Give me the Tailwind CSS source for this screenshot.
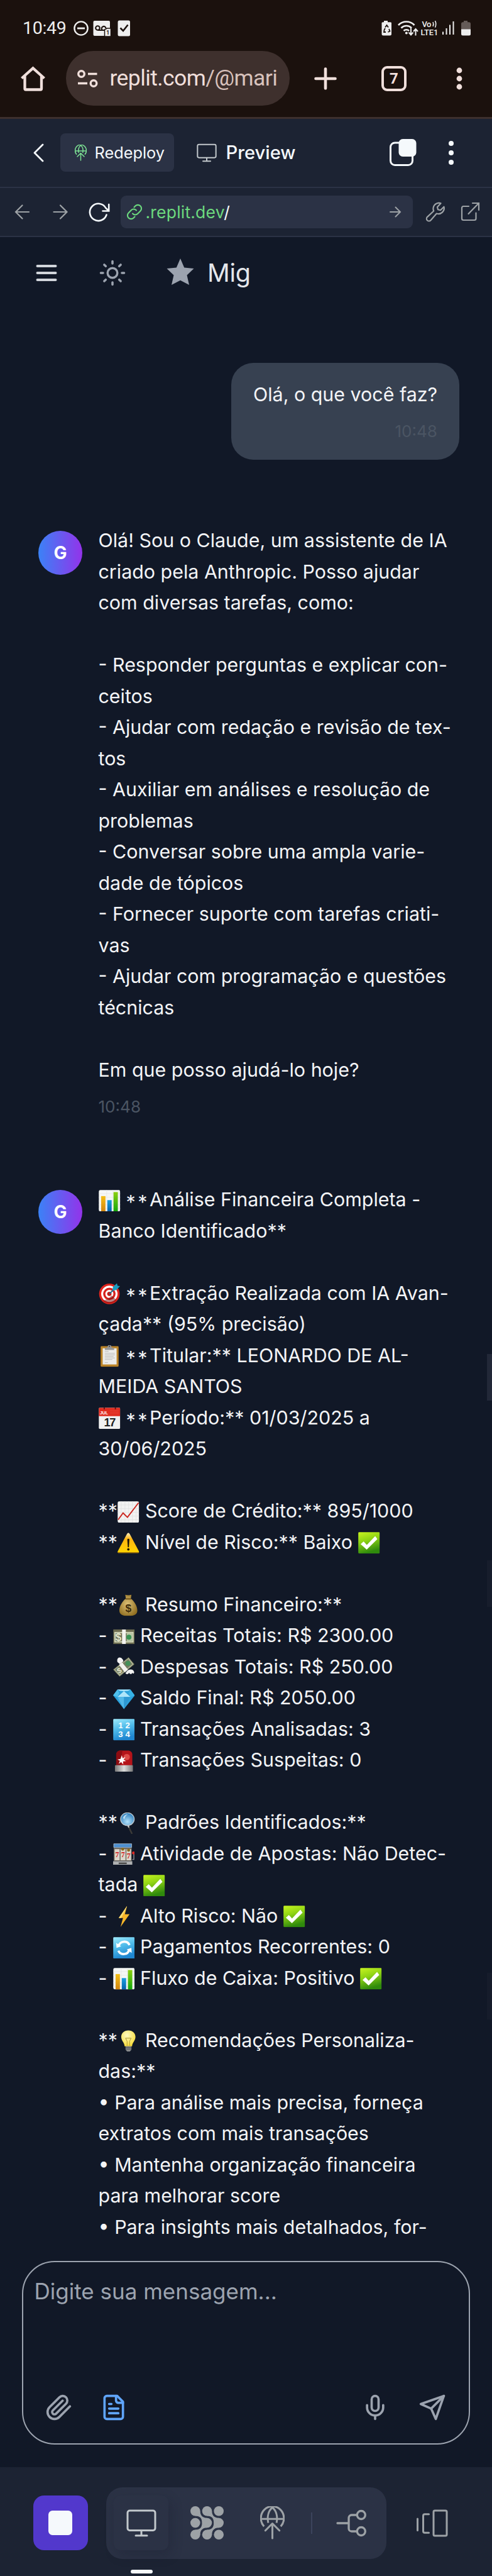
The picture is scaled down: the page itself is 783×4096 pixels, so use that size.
<!DOCTYPE html>
<html lang="pt-BR">
<head>
<meta charset="utf-8">
<title>Mig</title>
<script src="https://cdn.jsdelivr.net/npm/@tailwindcss/browser@4"></script>
</head>
<body class="w-[783px] h-[4096px] overflow-hidden bg-[#111827] font-['Inter',sans-serif]">

<!-- shared symbols -->
<svg class="absolute size-0" aria-hidden="true">
  <defs>
    <linearGradient id="gGreen" x1="0" y1="0" x2="0.3" y2="1"><stop offset="0" stop-color="#c8f420"/><stop offset=".45" stop-color="#8fd414"/><stop offset="1" stop-color="#2f8a0c"/></linearGradient>
    <linearGradient id="gBlue" x1="0" y1="0" x2="0.3" y2="1"><stop offset="0" stop-color="#a0ecfd"/><stop offset=".5" stop-color="#4fbbea"/><stop offset="1" stop-color="#1f86d0"/></linearGradient>
    <linearGradient id="gGold" x1="0" y1="0" x2="0" y2="1"><stop offset="0" stop-color="#f5c018"/><stop offset="1" stop-color="#cf8410"/></linearGradient>
    <linearGradient id="gBar" x1="0" y1="0" x2="0" y2="1"><stop offset="0" stop-color="#18a0e0"/><stop offset="1" stop-color="#0561ab"/></linearGradient>
    <linearGradient id="gLime" x1="0" y1="0" x2="0" y2="1"><stop offset="0" stop-color="#8ccf10"/><stop offset="1" stop-color="#12a80c"/></linearGradient>
    <linearGradient id="gWarn" x1="0" y1="0" x2="0" y2="1"><stop offset="0" stop-color="#fff0c0"/><stop offset=".3" stop-color="#ffb412"/><stop offset="1" stop-color="#ffd500"/></linearGradient>
    <radialGradient id="gBag" cx=".45" cy=".45" r=".6"><stop offset="0" stop-color="#dcc077"/><stop offset="1" stop-color="#927022"/></radialGradient>
    <linearGradient id="gMetal" x1="0" y1="0" x2="1" y2="0"><stop offset="0" stop-color="#777"/><stop offset=".5" stop-color="#ddd"/><stop offset="1" stop-color="#777"/></linearGradient>
    <radialGradient id="gLens" cx=".5" cy=".7" r=".7"><stop offset="0" stop-color="#b4e2fb"/><stop offset="1" stop-color="#2578b8"/></radialGradient>
    <radialGradient id="gBulb" cx=".4" cy=".3" r=".7"><stop offset="0" stop-color="#fffbc0"/><stop offset="1" stop-color="#f7dc3c"/></radialGradient>
    <symbol id="e-bars" viewBox="0 0 35 35"><rect x=".3" y=".3" width="34.4" height="34.4" rx="2.5" fill="#f6f7f6"/><path d="M0 6h35M0 12h35M0 18h35M0 24h35M0 30h35M13 0v35M23 0v35M33 0v35" stroke="#e3e6e4" stroke-width=".7"/><rect x="4" y="10" width="7" height="25" fill="url(#gGold)"/><rect x="14" y="16.500" width="7" height="18.500" fill="url(#gBar)"/><rect x="24" y="3.500" width="7" height="31.500" fill="url(#gLime)"/></symbol>
    <symbol id="e-target" viewBox="0 0 35 35"><circle cx="17.300" cy="17.600" r="16.600" fill="#e0241d"/><circle cx="17.300" cy="17.600" r="13.200" fill="#fff"/><circle cx="17.300" cy="17.600" r="10" fill="#d7221d"/><circle cx="17.300" cy="17.600" r="6.500" fill="#fff"/><circle cx="17.300" cy="17.600" r="3.500" fill="#c41c18"/><path d="M7 29a16.600 16.600 0 0 0 22-1l-8-8-4 4z" fill="#7a0c0c" opacity=".5"/><path d="M17.500 17.500L27 8" stroke="#1c6f8d" stroke-width="1.800"/><path d="M22 12.500l1-6L29.500.5l1 4 4 .5-6 6.500z" fill="#1a9cc0"/></symbol>
    <symbol id="e-clip" viewBox="0 0 35 35"><rect x="3.200" y="1.500" width="29" height="33.200" rx="1.500" fill="#bb8428"/><rect x="6.500" y="5" width="22.500" height="26" fill="#ececea"/><path d="M10 10h6M10 13h16M10 15.500h16M10 18h14M10 20.500h16M10 23h12M10 28h5" stroke="#b5b5b3" stroke-width=".9"/><path d="M10 7.500V4.800l4-1.300 1-2.500a2.600 2.600 0 0 1 5 0l1 2.500 4 1.300v2.700z" fill="#969696"/><circle cx="17.500" cy="1.800" r="1" fill="#333"/></symbol>
    <symbol id="e-cal" viewBox="0 0 35 35"><rect x=".3" y=".5" width="34.400" height="34" rx="1.500" fill="#f1f1f1"/><path d="M.3 14V2A1.500 1.500 0 0 1 1.800.5h31.400a1.500 1.500 0 0 1 1.500 1.500v12z" fill="#e02c20"/><path d="M9 0v3M27 0v3" stroke="#5c1110" stroke-width="1.800"/><path d="M19 5h14M19 7.500h14M19 10h14" stroke="#ef6a60" stroke-width=".7" stroke-dasharray="1 1"/><text x="2" y="11.300" font-family="Liberation Sans" font-size="7" font-weight="700" fill="#fff">JUL</text><text x="17.500" y="30.500" text-anchor="middle" font-family="Liberation Sans" font-size="18.500" font-weight="700" letter-spacing="-1.500" fill="#222">17</text></symbol>
    <symbol id="e-up" viewBox="0 0 35 35"><rect x=".3" y=".3" width="34.400" height="34.400" rx="2.500" fill="#f3f3f2"/><path d="M0 6h35M0 12h35M0 18h35M0 24h35M0 30h35M6 0v35M12 0v35M18 0v35M24 0v35M30 0v35" stroke="#dddfdd" stroke-width=".7"/><path d="M1 30L9 19l7 7L34 2.500" fill="none" stroke="#cb241c" stroke-width="1.900"/></symbol>
    <symbol id="e-warn" viewBox="0 0 35 35"><path d="M17.500 1.500c1 0 1.700.6 2.200 1.600L34.500 31c.7 1.500 0 2.800-1.500 2.800H2C.5 33.800-.2 32.500.5 31L15.300 3.100c.5-1 1.200-1.600 2.200-1.600z" fill="url(#gWarn)"/><path d="M.4 32.400c.2.900.8 1.400 1.600 1.400h31c.8 0 1.400-.5 1.600-1.400z" fill="#a87408"/><path d="M15.900 12.500c0-2 3.200-2 3.200 0L18.400 24.500h-1.800z" fill="#1b1405"/><circle cx="17.500" cy="28" r="1.900" fill="#1b1405"/></symbol>
    <symbol id="e-check" viewBox="0 0 35 35"><rect x=".2" y=".2" width="34.600" height="34.600" rx="1.500" fill="url(#gGreen)"/><path d="M4 19.500l4.800-4.300 5.200 5.500L27.500 6.500l3.500 4.800L13.800 28.500z" fill="#fff"/></symbol>
    <symbol id="e-bag" viewBox="0 0 35 35"><path d="M12.500.8c3 1 7 1 10 0L21.500 7c5 3 10.500 12 10.500 19 0 6-4 8.800-14.500 8.800S3 32 3 26C3 19 8.500 10 13.500 7z" fill="url(#gBag)"/><path d="M13 7.500h9" stroke="#6d4f15" stroke-width="1.700"/><text x="17.500" y="28.500" text-anchor="middle" font-family="Liberation Sans" font-size="17.500" font-weight="700" fill="#3d2b0a">$</text></symbol>
    <symbol id="e-cash" viewBox="0 0 35 35"><rect x=".3" y="6" width="34.400" height="23.500" fill="#6c6c50"/><rect x="2" y="10" width="31" height="17" fill="#d3d7b8"/><rect x="4" y="12" width="27" height="13" fill="#6c7158"/><rect x="22" y="12" width="9" height="13" fill="#b9c8a6"/><circle cx="25.500" cy="18.500" r="4" fill="#399253"/><text x="8.500" y="24.500" text-anchor="middle" font-family="Liberation Sans" font-size="17" font-weight="700" fill="#e5e8cf">$</text><path d="M14.500 6h6v23.500h-6z" fill="#f3f3ee"/></symbol>
    <symbol id="e-fly" viewBox="0 0 35 35"><path d="M7 9C5 2 11-1 15 4c3 3 1 7-2 10z" fill="#f5f5f5"/><path d="M22 24c4-5 11-4 12 1 0 3-2 3-3 1-1 3-4 3-5 0-2 3-5 3-6 1z" fill="#f0f0f0"/><path d="M.5 21L25 1.500l9 11L10.500 32z" fill="#b1b696" stroke="#5f634a" stroke-width="1"/><path d="M3 21L24.500 4l6.500 8.500L11 29z" fill="#747a60"/><circle cx="24" cy="11" r="4" fill="#439058"/><path d="M9.500 13.500l5-4L24 21l-5 4.500z" fill="#f3f3ee"/><text x="10.500" y="27" text-anchor="middle" font-family="Liberation Sans" font-size="12" font-weight="700" fill="#e5e8cf" transform="rotate(-30 10 24)">$</text></symbol>
    <symbol id="e-gem" viewBox="0 0 35 35"><path d="M7 2.500h21L35 12 17.500 34 0 12z" fill="#2ba2dc"/><path d="M7 2.500h21l-3.500 2-7 .5-7-.5zM7 14.500L17.500 5l10.500 9.500z" fill="#aee6fa"/><path d="M0 12l7-9.500L10 8l-3 6.500z" fill="#4fc0ec"/><path d="M35 12l-7-9.500L25 8l3 6.500z" fill="#37b2e5"/><path d="M7 14.500h21L17.500 34z" fill="#53b9e8"/><path d="M17.500 14.500H28L17.500 34z" fill="#2d98d2"/></symbol>
    <symbol id="e-num" viewBox="0 0 35 35"><rect x=".2" y=".2" width="34.600" height="34.600" rx="1.500" fill="url(#gBlue)"/><g font-family="Liberation Sans" font-size="13.500" font-weight="700" fill="#fff" text-anchor="middle"><text x="12" y="15.500">1</text><text x="23.500" y="15.500">2</text><text x="12" y="29.500">3</text><text x="23.500" y="29.500">4</text></g></symbol>
    <symbol id="e-siren" viewBox="0 0 35 35"><path d="M5 25V7c0-4 3-6.500 7-6.500h12c4 0 7 2.500 7 6.500v18z" fill="#b5141a"/><path d="M5 25V7c0-4 3-6.500 7-6.500h3L12 25z" fill="#8d0c12"/><circle cx="22" cy="11" r="5" fill="#dd4b48"/><path d="M14 8l1.500 5 4.500-2-3 4 4 2.500-5 .5.500 5-3.500-4-4 3 2-5-4-2 5-1z" fill="#fff"/><rect x="3" y="24" width="29" height="10.500" rx="1" fill="url(#gMetal)"/></symbol>
    <symbol id="e-lens" viewBox="0 0 35 35"><path d="M16.500 20l7 14.500" stroke="#3b3a38" stroke-width="2.600"/><path d="M16 19l2.500 5" stroke="#ccc" stroke-width="2.200"/><ellipse cx="16" cy="10.700" rx="11" ry="10.300" fill="url(#gLens)" stroke="#c3ccd2" stroke-width="1.300"/><path d="M9 9c1-4 4-6 8-6-3 1-5 4-6 8z" fill="#e6f6ff" opacity=".7"/></symbol>
    <symbol id="e-slot" viewBox="0 0 35 35"><path d="M1 .7h29v6H1z" fill="#4d8fd0" stroke="#b8c4cf" stroke-width=".8"/><path d="M1 7h29v22H1z" fill="#6e6960"/><path d="M2.500 9.500h8v18h-8zM12 9.500h8v18h-8zM21.500 9.500h7.500v18h-7.500z" fill="#dcd6ca"/><circle cx="15.500" cy="9.500" r="2.500" fill="#8a6a20"/><circle cx="25" cy="11" r="2.500" fill="#8a6a20"/><g font-family="Liberation Serif" font-size="12" font-weight="700" fill="#d0161a" text-anchor="middle"><text x="6.500" y="22">7</text><text x="16" y="22">7</text><text x="25" y="24.500">7</text></g><path d="M0 29h31v5.500H0z" fill="#aeb0b1"/><path d="M9 31h13v2.500H9z" fill="#4a4a4a"/><path d="M31 26h2.500V16" stroke="#8b8e90" stroke-width="1.500" fill="none"/><circle cx="33" cy="15.500" r="2.400" fill="#e02a24"/></symbol>
    <symbol id="e-bolt" viewBox="0 0 35 35"><path d="M22.500.5L9 20h7l-4 14.500L26.500 14h-7.500z" fill="#f8b62a"/><path d="M22.500.5L9 20h4L21 5z" fill="#fddd72"/></symbol>
    <symbol id="e-cycle" viewBox="0 0 35 35"><rect x=".2" y=".2" width="34.600" height="34.600" rx="1.500" fill="url(#gBlue)"/><path d="M9 14.500a9.300 9.300 0 0 1 17.500-1.500M26 20.500A9.300 9.300 0 0 1 8.500 22" fill="none" stroke="#fff" stroke-width="3.600"/><path d="M5 9.500l.5 8 7.500-2.500zM30 25.500l-.5-8-7.500 2.500z" fill="#fff"/></symbol>
    <symbol id="e-bulb" viewBox="0 0 35 35"><path d="M17.500.5c7 0 11.500 4.700 11.500 10.500 0 6-5 9-5.500 15h-12C11 20 6 17 6 11 6 5.200 10.500.5 17.500.5z" fill="url(#gBulb)"/><path d="M15.500 25V18l-2.500-5h9l-2.500 5v7" fill="none" stroke="#a58f2c" stroke-width=".9"/><path d="M13 26h9.500v5.500l-2.500 3h-4.500l-2.500-3z" fill="#87898b"/><path d="M13 28h9.500M13 30.500h9.500" stroke="#4c4d4f" stroke-width="1"/></symbol>
    <symbol id="globe" viewBox="0 0 38 52"><g fill="none" stroke="currentColor" stroke-width="3" stroke-linecap="round" stroke-linejoin="round"><path d="M6 31.500A18 18.500 0 1 1 32 31.500" stroke-linecap="butt"/><path d="M2 19.800h34M12.500 26C10.500 16 13 7 19 2c6 5 8.500 14 6.500 24" stroke-linecap="butt"/><path d="M19 50V27M8 38l11-11 11 11"/></g></symbol>
    <symbol id="monitor" viewBox="0 0 48 44"><g fill="none" stroke="currentColor" stroke-width="3" stroke-linecap="round"><rect x="2" y="2" width="44" height="31.500" rx="3.500"/><path d="M24 34v7M15 41.800h18"/></g></symbol>
  </defs>
</svg>

<!-- phone status bar + browser toolbar -->
<header class="h-[188.500px] border-b-[3px] border-[#3e302d] bg-[#1b110d] text-[#f0dfdb]">
  <div class="flex h-[81px] items-end pb-[23px] pl-[36px] pr-[33.500px] text-[#eeeeee]">
    <div class="font-[Roboto] text-[28.500px] leading-none tracking-[-0.3px] w-[81px] h-[27.500px]">10:49</div>
    <svg class="h-[26px] w-[92px]" viewBox="0 0 92 26"><circle cx="12" cy="13" r="10.600" fill="none" stroke="#eee" stroke-width="2.400"/><path d="M6 13h12" stroke="#eee" stroke-width="2.800"/><rect x="31.500" y="1" width="26.500" height="24" rx="2" fill="#eee"/><g fill="none" stroke="#1b110d" stroke-width="2.100"><circle cx="38.500" cy="12.500" r="3.300"/><path d="M38.500 16h13M45.500 15.500a3.400 3.400 0 1 1 6-2.500"/></g><path d="M49.500 15v11h10V13h-6z" fill="#eee" stroke="#1b110d" stroke-width="1.500"/><text x="54.600" y="23" text-anchor="middle" font-family="Roboto" font-size="8.500" font-weight="700" fill="#1b110d">1</text><rect x="70.500" y=".5" width="19.500" height="25" rx="2.500" fill="#eee"/><path d="M74.500 12.500l4.500 4.500 7.500-9.500" fill="none" stroke="#1b110d" stroke-width="2.600"/></svg>
    <svg class="ml-auto h-[26px] w-[143px]" viewBox="0 0 143 26"><path d="M3.500 1h6v2.200h4A2 2 0 0 1 15.500 5.500V22a2.500 2.500 0 0 1-2.500 2.500H2.500A2.500 2.500 0 0 1 0 22V5.500a2 2 0 0 1 2-2.300h1.500z" fill="#eee" transform="translate(.5)"/><path d="M6 11.500L8.500 8l2.500 3.500M12 14l1.500 3.500-3 1.500M7 19H4l.5-3.500L6 13" fill="none" stroke="#1b110d" stroke-width="1.800"/><g fill="none" stroke="#eee" stroke-width="2.700"><path d="M27 8a17.500 17.500 0 0 1 25.500 0"/><path d="M31.500 12.500a11.500 11.500 0 0 1 16.500 0" /><path d="M35.500 17a6 6 0 0 1 8.500 0" /></g><circle cx="39.800" cy="20.500" r="2" fill="#eee"/><path d="M47 13v10M43.500 19.500l3.500 4 3.500-4M54.500 24.500V14.500M51 18l3.500-4 3.500 4" fill="none" stroke="#eee" stroke-width="2"/><g fill="#eee" font-family="Roboto" font-weight="500" font-size="13"><text x="64.500" y="10.800" textLength="15">Vo</text><text x="62.500" y="24" textLength="28">LTE1</text></g><path d="M82 3a8 8 0 0 1 0 7M85.500 1.200a12 12 0 0 1 0 10.400" fill="none" stroke="#eee" stroke-width="1.600"/><path d="M98 18.500v4.500M103.500 13v10M109 7.500V23M114.500 2v21" stroke="#eee" stroke-width="2"/><path d="M131 1h6v2.200h2.500a2.500 2.500 0 0 1 2.500 2.500V15h-15V5.700a2.500 2.500 0 0 1 2.500-2.500h1.500z" fill="#655b58"/><path d="M127 14.500h15V22a2.500 2.500 0 0 1-2.500 2.500h-10A2.500 2.500 0 0 1 127 22z" fill="#eee"/></svg>
  </div>
  <div class="flex h-[87px] items-center pl-[32px]">
    <svg class="h-[42px] w-[41px]" viewBox="0 0 41 42"><path d="M7.500 17v20a1.500 1.500 0 0 0 1.500 1.500h23.500A1.500 1.500 0 0 0 34 37V17M2.500 20.500L20.500 4.500 38.500 20.500" fill="none" stroke="currentColor" stroke-width="4.300"/></svg>
    <div class="ml-[32px] flex h-[87px] w-[356px] items-center rounded-full bg-[#3e302d] pl-[18px]">
      <svg class="h-[30px] w-[34px]" viewBox="0 0 34 30"><g fill="none" stroke="currentColor" stroke-width="3.400"><circle cx="6.500" cy="7.500" r="4.800"/><path d="M17 7.500h14.500M1 22.500h15"/><circle cx="26" cy="22.500" r="4.800"/></g></svg>
      <div class="ml-[17.500px] whitespace-nowrap font-[Roboto] text-[35.500px] leading-[45px] tracking-[-0.600px]">replit.com<span class="text-[#d8c2bc]">/@mari</span></div>
    </div>
    <svg class="ml-[39px] size-[36px]" viewBox="0 0 36 36"><path d="M18 2.500v31M2.500 18h31" stroke="currentColor" stroke-width="4.600" stroke-linecap="round"/></svg>
    <div class="ml-[71px] flex size-[40px] items-center justify-center rounded-[9px] border-[4.500px] border-current font-[Roboto] text-[24px] font-bold leading-none">7</div>
    <svg class="ml-[79px] h-[36px] w-[10px]" viewBox="0 0 10 36" fill="currentColor"><circle cx="5" cy="5" r="4.400"/><circle cx="5" cy="18" r="4.400"/><circle cx="5" cy="31" r="4.400"/></svg>
  </div>
</header>

<!-- workspace header -->
<div class="flex h-[110px] items-center border-b-2 border-[#2b3245] bg-[#1c2333] pl-[51px] text-[#f5f9fc]">
  <svg class="h-[34px] w-[20px]" viewBox="0 0 20 34"><path d="M17 4L4 17l13 13" fill="none" stroke="currentColor" stroke-width="2.800" stroke-linecap="round" stroke-linejoin="round"/></svg>
  <div class="ml-[25px] flex h-[61px] w-[181px] items-center rounded-[8px] bg-[#2b3245] pl-[22.500px]">
    <svg class="h-[26px] w-[19px] text-[#7ee495]"><use href="#globe"/></svg>
    <span class="ml-[13px] text-[25.300px] leading-[30px]">Redeploy</span>
  </div>
  <svg class="ml-[36px] h-[30px] w-[32px] text-[#c2c8cc]"><use href="#monitor"/></svg>
  <span class="ml-[14.500px] w-[130.500px] text-[29.200px] font-medium leading-[34px]">Preview</span>
  <svg class="ml-[129px] h-[44px] w-[44px]" viewBox="0 0 44 44"><rect x="2.500" y="6" width="35" height="35.500" rx="7" fill="none" stroke="currentColor" stroke-width="3"/><rect x="15.500" y="0" width="28" height="28" rx="6.500" fill="currentColor"/></svg>
  <svg class="ml-[49.500px] h-[40px] w-[10px]" viewBox="0 0 10 40" fill="currentColor"><circle cx="5" cy="5" r="4"/><circle cx="5" cy="20" r="4"/><circle cx="5" cy="35" r="4"/></svg>
</div>
<div class="flex h-[78.500px] items-center border-b-2 border-[#2b3245] bg-[#1c2333] pl-[22.500px] text-[#9da2a6]">
  <svg class="h-[26px] w-[86px]" viewBox="0 0 86 26"><path d="M12.500 2.500L2 13l10.500 10.500M2 13h21M73 2.500L83.500 13 73 23.500M83.500 13h-21" fill="none" stroke="currentColor" stroke-width="2.200" stroke-linecap="round"/></svg>
  <svg class="ml-[32px] h-[32px] w-[36px] text-[#f5f9fc]" viewBox="0 0 36 32"><path d="M28.500 20.500a13.600 13.600 0 1 1-1-10.500L32 14M32.200 4v10.500H22.500" fill="none" stroke="currentColor" stroke-width="2.600" stroke-linecap="round"/></svg>
  <div class="ml-[15px] flex h-[52px] w-[465px] items-center rounded-[9px] bg-[#2b3245] pl-[9.500px]">
    <svg class="h-[26px] w-[26px] text-[#6cd97e]" viewBox="0 0 26 26"><g fill="none" stroke="currentColor" stroke-width="2.100" stroke-linecap="round"><path d="M10 15.500a5.600 5.600 0 0 0 8.200.3l4.200-4.300a5.600 5.600 0 0 0-8-8L12.500 5.500"/><path d="M16 10.500a5.600 5.600 0 0 0-8.200-.3L3.600 14.500a5.600 5.600 0 0 0 8 8l1.900-2"/></g></svg>
    <span class="ml-[4.500px] text-[26.500px] leading-[32px] tracking-[0.200px] text-[#6cd97e]">.replit.dev<span class="text-[#f5f9fc]">/</span></span>
    <svg class="ml-auto mr-[17.500px] h-[20px] w-[20px]" viewBox="0 0 20 20"><path d="M10.500 2.500L18 10l-7.500 7.500M18 10H2" fill="none" stroke="currentColor" stroke-width="2" stroke-linecap="round"/></svg>
  </div>
  <svg class="ml-[20px] h-[32px] w-[32px]" viewBox="0 0 32 32"><path d="M20 1.800a9 9 0 0 1 4.500.4l-5.500 6 1 4 4 1 5.500-5.500a9 9 0 0 1-11.700 10.800L8.500 29.300a3.700 3.700 0 0 1-5.600-5.200L13.200 14.500A9.200 9.200 0 0 1 20 1.800z" fill="none" stroke="currentColor" stroke-width="2.200" stroke-linejoin="round"/></svg>
  <svg class="ml-[24px] h-[31px] w-[31px]" viewBox="0 0 31 31"><path d="M13 7H4.500A2.500 2.500 0 0 0 2 9.500v17A2.500 2.500 0 0 0 4.500 29H22a2.500 2.500 0 0 0 2.500-2.500V17.500M19 2h10v11M29 2L12.500 19" fill="none" stroke="currentColor" stroke-width="2.200" stroke-linecap="round"/></svg>
</div>

<!-- chat header -->
<div class="flex h-[113px] items-center pl-[57px] text-[#9ca3af]">
  <svg class="h-[28px] w-[34px] text-[#d1d5db]" viewBox="0 0 34 28"><path d="M2.500 3h29M2.500 14h29M2.500 25h29" stroke="currentColor" stroke-width="4" stroke-linecap="round"/></svg>
  <svg class="ml-[67px] h-[42px] w-[42px]" viewBox="0 0 42 42"><circle cx="21" cy="21" r="7.800" fill="none" stroke="currentColor" stroke-width="3.400"/><path d="M21 2.500v3.500M21 36v3.500M2.500 21H6M36 21h3.500M7.900 7.900l2.400 2.400M31.700 31.700l2.400 2.400M7.900 34.100l2.400-2.400M31.700 10.300l2.400-2.400" stroke="currentColor" stroke-width="3.600" stroke-linecap="round"/></svg>
  <svg class="ml-[65px] -mt-[3px] h-[42px] w-[44px]" viewBox="0 0 44 42"><path d="M22 0l6.200 14.500L43.500 16 32.500 26.500 36 42 22 34.800 8 42l3.500-15.500L.5 16l15.300-1.500z" fill="currentColor"/></svg>
  <h1 class="ml-[21px] text-[39.500px] leading-[48px] tracking-[-0.300px] text-[#e5e7eb]">Mig</h1>
</div>

<main class="h-[3088.500px] overflow-hidden text-[30.400px] leading-[49.500px] text-[#f3f4f6]">
  <!-- user message -->
  <div class="ml-auto mr-[52px] mt-[87px] h-[154px] w-[363px] rounded-[35px] bg-[#374151] px-[35px] pt-[25.500px] text-right">
    <p class="whitespace-nowrap">Olá, o que você faz?</p>
    <time class="mt-[14px] block text-[26.100px] leading-[40px] text-[#4b5563]">10:48</time>
  </div>

  <!-- assistant message 1 -->
  <article class="mt-[104px] flex pl-[61px]">
    <div class="mt-[9px] flex size-[70px] shrink-0 items-center justify-center rounded-full bg-linear-to-r/srgb from-[#3b82f6] to-[#9333ea] text-[28px] font-bold leading-none text-white">G</div>
    <div class="ml-[25.500px] whitespace-nowrap">
      <p>Olá! Sou o Claude, um assistente de IA</p>
      <p>criado pela Anthropic. Posso ajudar</p>
      <p>com diversas tarefas, como:</p>
      <p>&nbsp;</p>
      <p>- Responder perguntas e explicar con-</p>
      <p>ceitos</p>
      <p>- Ajudar com redação e revisão de tex-</p>
      <p>tos</p>
      <p>- Auxiliar em análises e resolução de</p>
      <p>problemas</p>
      <p>- Conversar sobre uma ampla varie-</p>
      <p>dade de tópicos</p>
      <p>- Fornecer suporte com tarefas criati-</p>
      <p>vas</p>
      <p>- Ajudar com programação e questões</p>
      <p>técnicas</p>
      <p>&nbsp;</p>
      <p>Em que posso ajudá-lo hoje?</p>
      <time class="mt-[14px] block text-[26.100px] leading-[40px] text-[#4b5563]">10:48</time>
    </div>
  </article>

  <!-- assistant message 2 -->
  <article class="mt-[103px] flex pl-[61px]">
    <div class="mt-[9px] flex size-[70px] shrink-0 items-center justify-center rounded-full bg-linear-to-r/srgb from-[#3b82f6] to-[#9333ea] text-[28px] font-bold leading-none text-white">G</div>
    <div class="ml-[25.500px] h-[1700px] whitespace-nowrap [&_p]:h-[49.500px] [&_svg]:mx-[0.500px] [&_svg]:inline-block [&_svg]:size-[34.500px] [&_svg]:align-[-8px] [&_i]:align-[-3.500px] [&_i]:leading-none [&_i]:not-italic [&_i]:tracking-[3.500px]">
      <p><svg role="img" aria-label="📊"><use href="#e-bars"/></svg> <i>**</i>Análise Financeira Completa -</p>
      <p>Banco Identificado**</p>
      <p>&nbsp;</p>
      <p><svg role="img" aria-label="🎯"><use href="#e-target"/></svg> <i>**</i>Extração Realizada com IA Avan-</p>
      <p>çada** (95% precisão)</p>
      <p><svg role="img" aria-label="📋"><use href="#e-clip"/></svg> <i>**</i>Titular:** LEONARDO DE AL-</p>
      <p>MEIDA SANTOS</p>
      <p><svg role="img" aria-label="📅"><use href="#e-cal"/></svg> <i>**</i>Período:** 01/03/2025 a</p>
      <p>30/06/2025</p>
      <p>&nbsp;</p>
      <p>**<svg role="img" aria-label="📈"><use href="#e-up"/></svg> Score de Crédito:** 895/1000</p>
      <p>**<svg role="img" aria-label="⚠️"><use href="#e-warn"/></svg> Nível de Risco:** Baixo <svg role="img" aria-label="✅"><use href="#e-check"/></svg></p>
      <p>&nbsp;</p>
      <p>**<svg role="img" aria-label="💰"><use href="#e-bag"/></svg> Resumo Financeiro:**</p>
      <p>- <svg role="img" aria-label="💵"><use href="#e-cash"/></svg> Receitas Totais: R$ 2300.00</p>
      <p>- <svg role="img" aria-label="💸"><use href="#e-fly"/></svg> Despesas Totais: R$ 250.00</p>
      <p>- <svg role="img" aria-label="💎"><use href="#e-gem"/></svg> Saldo Final: R$ 2050.00</p>
      <p>- <svg role="img" aria-label="🔢"><use href="#e-num"/></svg> Transações Analisadas: 3</p>
      <p>- <svg role="img" aria-label="🚨"><use href="#e-siren"/></svg> Transações Suspeitas: 0</p>
      <p>&nbsp;</p>
      <p>**<svg role="img" aria-label="🔍"><use href="#e-lens"/></svg> Padrões Identificados:**</p>
      <p>- <svg role="img" aria-label="🎰"><use href="#e-slot"/></svg> Atividade de Apostas: Não Detec-</p>
      <p>tada <svg role="img" aria-label="✅"><use href="#e-check"/></svg></p>
      <p>- <svg role="img" aria-label="⚡"><use href="#e-bolt"/></svg> Alto Risco: Não <svg role="img" aria-label="✅"><use href="#e-check"/></svg></p>
      <p>- <svg role="img" aria-label="🔄"><use href="#e-cycle"/></svg> Pagamentos Recorrentes: 0</p>
      <p>- <svg role="img" aria-label="📊"><use href="#e-bars"/></svg> Fluxo de Caixa: Positivo <svg role="img" aria-label="✅"><use href="#e-check"/></svg></p>
      <p>&nbsp;</p>
      <p>**<svg role="img" aria-label="💡"><use href="#e-bulb"/></svg> Recomendações Personaliza-</p>
      <p>das:**</p>
      <p>• Para análise mais precisa, forneça</p>
      <p>extratos com mais transações</p>
      <p>• Mantenha organização financeira</p>
      <p>para melhorar score</p>
      <p>• Para insights mais detalhados, for-</p>
    </div>
  </article>
</main>

<!-- scrollbar thumbs overlaying the chat -->
<div class="absolute left-[775px] top-[2153px] h-[74px] w-[8px] bg-[#222838]"></div>
<div class="absolute left-[775px] top-[2481px] h-[74px] w-[8px] bg-[#171d2c]"></div>
<div class="absolute left-[775px] top-[3137px] h-[74px] w-[8px] bg-[#161c2b]"></div>

<!-- composer -->
<footer class="flex h-[344px] flex-col px-[35px] pt-[16.500px]">
  <div class="flex h-[292px] flex-col rounded-[52px] border-2 border-[#9ca3af] text-[#9ca3af]">
    <div class="mt-[22px] pl-[17.500px] text-[35px] leading-[48px]">Digite sua mensagem...</div>
    <div class="mb-[35px] mt-auto flex items-center pl-[35px] pr-[36px]">
      <svg class="size-[44px]" viewBox="0 0 24 24" fill="none" stroke="currentColor" stroke-width="2" stroke-linecap="round" stroke-linejoin="round"><path d="m21.440 11.050-9.190 9.190a6 6 0 0 1-8.490-8.490l8.570-8.570A4 4 0 1 1 18 8.840l-8.590 8.570a2 2 0 0 1-2.830-2.830l8.490-8.480"/></svg>
      <svg class="ml-[43px] size-[44px] text-[#60a5fa]" viewBox="0 0 24 24" fill="none" stroke="currentColor" stroke-width="2" stroke-linecap="round" stroke-linejoin="round"><path d="M15 2H6a2 2 0 0 0-2 2v16a2 2 0 0 0 2 2h12a2 2 0 0 0 2-2V7Z"/><path d="M14 2v4a2 2 0 0 0 2 2h4"/><path d="M10 9H8M16 13H8M16 17H8"/></svg>
      <svg class="ml-auto size-[44px]" viewBox="0 0 24 24" fill="none" stroke="currentColor" stroke-width="2" stroke-linecap="round" stroke-linejoin="round"><path d="M12 2a3 3 0 0 0-3 3v7a3 3 0 0 0 6 0V5a3 3 0 0 0-3-3Z"/><path d="M19 10v2a7 7 0 0 1-14 0v-2"/><path d="M12 19v3"/></svg>
      <svg class="ml-[47px] size-[44px]" viewBox="0 0 24 24" fill="none" stroke="currentColor" stroke-width="2" stroke-linecap="round" stroke-linejoin="round"><path d="m22 2-7 20-4-9-9-4Z"/><path d="M22 2 11 13"/></svg>
    </div>
  </div>
</footer>

<!-- bottom dock -->
<nav class="relative flex h-[175px] items-start bg-[#1c2333] pl-[52.500px] pt-[32.500px] text-[#9da2a6]">
  <div class="mt-[13px] flex size-[87px] items-center justify-center rounded-[17px] bg-[#5238cc]"><div class="size-[38.500px] rounded-[6.500px] bg-[#f5f9fc]"></div></div>
  <div class="ml-[29.500px] flex h-[113.500px] w-[446px] items-center rounded-[26px] bg-[#2b3245] pl-[12px]">
    <div class="flex size-[87px] items-center justify-center rounded-[10px] bg-[#2b3245] text-[#c2c8cc] shadow-[4px_8px_18px_rgba(20,24,40,0.25)]"><svg class="h-[44px] w-[48px]"><use href="#monitor"/></svg></div>
    <svg class="ml-[35px] h-[53px] w-[53px]" viewBox="0 0 53 53" fill="currentColor"><circle cx="7.800" cy="7.800" r="7.800"/><circle cx="26.500" cy="7.800" r="7.800"/><circle cx="45.200" cy="7.800" r="7.800"/><circle cx="7.800" cy="26.500" r="7.800"/><circle cx="26.500" cy="26.500" r="7.800"/><circle cx="45.200" cy="26.500" r="7.800"/><circle cx="7.800" cy="45.200" r="7.800"/><circle cx="26.500" cy="45.200" r="7.800"/><circle cx="45.200" cy="45.200" r="7.800"/><path d="M15.600 7.800c0 6 3 10.900 10.900 10.900v15.600c-7.900 0-10.900 5-10.900 10.900L7.800 37.400c8 0 10.700-4 10.700-10.900S15.800 15.600 7.800 15.600zM34.300 7.800c0 6 3 10.900 10.900 10.900v15.600c-7.900 0-10.900 5-10.900 10.900l-7.800-7.800c8 0 10.700-4 10.700-10.900s-2.700-10.900-10.700-10.900z"/></svg>
    <svg class="ml-[58px] h-[53px] w-[39px]"><use href="#globe"/></svg>
    <div class="ml-[42px] h-[34px] w-[2px] bg-[#3c445c]"></div>
    <svg class="ml-[38px] h-[44px] w-[48px]" viewBox="0 0 48 44"><g fill="none" stroke="currentColor" stroke-width="3.300" stroke-linecap="round"><path d="M2 22h18M33 9h-8.500a4.500 4.500 0 0 0-4.500 4.500v17a4.500 4.500 0 0 0 4.500 4.500H33"/><circle cx="39.800" cy="9" r="6.500"/><circle cx="39.800" cy="35" r="6.500"/></g></svg>
  </div>
  <svg class="ml-[47px] mt-[35px] h-[44px] w-[52px]" viewBox="0 0 52 44"><g fill="none" stroke="currentColor" stroke-width="3" stroke-linecap="round"><rect x="28" y="2" width="21" height="40" rx="2"/><path d="M20.500 7.800H14a2.500 2.500 0 0 0-2.500 2.500v24.500a2.500 2.500 0 0 0 2.500 2.500h6.500M2.500 15v18.500"/></g></svg>
  <div class="absolute left-[208px] top-[163px] h-[6px] w-[35px] rounded-[3px] bg-[#f5f9fc]"></div>
</nav>
</body>
</html>
